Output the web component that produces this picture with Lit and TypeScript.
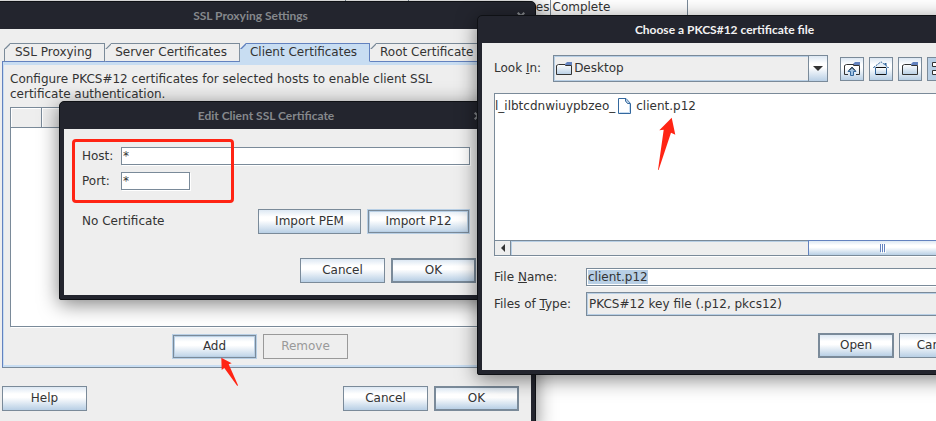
import { LitElement, html, css, svg } from "lit";
import { customElement, property, query } from "lit/decorators.js";

@customElement("desktop-window")
class DesktopWindow extends LitElement {
  @property() heading = "";
  @property({ type: Boolean, reflect: true }) active = false;

  static styles = css`
    :host {
      display: block;
      box-sizing: border-box;
      background: #23252e;
      border: 1px solid #0f1115;
      border-radius: 5px 5px 2px 2px;
      padding: 0 4px 4px;
      box-shadow: 0 4px 20px rgba(0, 0, 0, 0.5);
    }
    .bar {
      display: flex;
      align-items: center;
      height: 27px;
    }
    .title {
      flex: 1;
      margin: 0;
      text-align: center;
      font: 700 12px/27px Lato, "Noto Sans", sans-serif;
      color: #85888c;
    }
    :host([active]) .title {
      color: #f2f2f2;
    }
    .close {
      display: flex;
      width: 20px;
      padding: 0 6px;
      border: 0;
      background: none;
      color: #85888c;
    }
    .body {
      background: #eeeeee;
    }
  `;

  render() {
    return html`
      <header class="bar">
        <h2 class="title">${this.heading}</h2>
        <button class="close" aria-label="Close">
          <svg width="8" height="8" viewBox="0 0 8 8" fill="none" stroke="currentColor" stroke-width="2">
            <path d="M.7 .7 7.3 7.3M7.3 .7 .7 7.3" />
          </svg>
        </button>
      </header>
      <div class="body"><slot></slot></div>
    `;
  }
}

const sheen = svg`
  <defs>
    <linearGradient id="sheen" x1="0" y1="0" x2="0" y2="1">
      <stop offset="0" stop-color="#fff" />
      <stop offset="1" stop-color="#b8cfe5" />
    </linearGradient>
  </defs>`;

const folderIcon = html`<svg width="16" height="13" viewBox="0 0 16 13">
  ${sheen}
  <path d="M.5 12.5V3.5L2.5 2.5H9.5V3.5H15.5V12.5Z" fill="url(#sheen)" stroke="#333" />
  <path d="M9 3V2L11 0H16V3Z" fill="#6382bf" />
</svg>`;

const upIcon = html`<svg width="16" height="14" viewBox="0 0 16 14">
  <path d="M9 3V2L11 0H16V3Z" fill="#6382bf" />
  <path d="M4 12.5H.5V3.5L2.5 2.5H9.5V3.5H15.5V12.5H12" fill="none" stroke="#333" />
  <path d="M8 5 12 9.5H9.5V13.5H6.5V9.5H4Z" fill="#a3c4e4" stroke="#34689e" />
  <path d="M5 8.5 8 5.5 11 8.5" fill="none" stroke="#222" />
</svg>`;

const homeIcon = html`<svg width="16" height="15" viewBox="0 0 16 15">
  ${sheen}
  <path d="M2.5 7V13.5H13.5V7" fill="url(#sheen)" stroke="#34689e" />
  <path d="M12.5 5V2" stroke="#34689e" stroke-width="2" />
  <path d="M.5 6.5 8 .8 15.5 6.5Z" fill="#e7f0f8" stroke="#34689e" stroke-dasharray="2 1" />
  <path d="M3 6.5H13M3 13.5H13" stroke="#111" />
</svg>`;

const listIcon = html`<svg width="14" height="14" viewBox="0 0 14 14" fill="#fff" stroke="#333">
  <path d="M.5 .5H4.5V4.5H.5ZM.5 8.5H4.5V12.5H.5ZM8.5 .5H12.5V4.5H8.5ZM8.5 8.5H12.5V12.5H8.5Z" />
</svg>`;

const detailsIcon = html`<svg width="14" height="14" viewBox="0 0 14 14" stroke="#333">
  <path d="M0 1.5H3M5 1.5H14M0 5.5H3M5 5.5H14M0 9.5H3M5 9.5H14M0 12.5H3M5 12.5H14" />
</svg>`;

const fileIcon = html`<svg width="13" height="16" viewBox="0 0 13 16">
  <path d="M.5 .5H8L12.5 5.5V15.5H.5Z" fill="#fff" stroke="#34689e" />
  <path d="M1.5 14.5H11.5V6" fill="none" stroke="#c8ddf2" />
  <path d="M7.5 1V3L9.5 5.5H12" fill="#b8cfe5" stroke="#34689e" />
</svg>`;

@customElement("app-root")
class AppRoot extends LitElement {
  @query("#file-name") fileName!: HTMLInputElement;

  static styles = css`
    :host {
      display: block;
      position: relative;
      min-height: 100vh;
      overflow: clip;
      background: #fff;
      color: #333;
      font: 12px/15px "DejaVu Sans", sans-serif;
    }
    button,
    input,
    select {
      box-sizing: border-box;
      margin: 0;
      font: inherit;
      color: inherit;
      outline: 0;
    }
    svg {
      display: block;
      flex: none;
    }

    /* session table behind the windows */
    .sessions {
      width: 100%;
      table-layout: fixed;
      border-collapse: collapse;
    }
    .sessions td {
      height: 15px;
      padding: 0 2px;
      border-right: 1px solid #7a8a99;
      white-space: nowrap;
    }
    .sessions td:last-child { border-right: 0; }
    .c-name { width: 345px; }
    .c-mid { width: 63px; }
    .c-time { width: 142px; }
    .c-status { width: 137px; }
    .sessions .right { text-align: right; padding-right: 0; }

    .settings { position: absolute; left: -15px; top: 1px; width: 551px; }
    .edit { position: absolute; left: 59px; top: 101px; width: 434px; }
    .chooser { position: absolute; left: 477px; top: 15px; width: 515px; }

    .btn {
      min-width: 85px;
      height: 25px;
      padding: 0 16px;
      border: 1px solid #7a8a99;
      background: linear-gradient(#dde8f3, #fff 30%, #fff 45%, #b8cfe5);
      white-space: nowrap;
    }
    .btn.default { border-width: 2px; }
    .btn.ring {
      border-color: #b8cfe5;
      box-shadow: inset 0 0 0 1px #7a8a99, inset 0 0 0 2px #b8cfe5;
    }
    .btn:disabled {
      background: #eee;
      border-color: #999;
      color: #999;
    }
    .row {
      display: flex;
      align-items: center;
      gap: 6px;
    }
    .center { justify-content: center; }
    .end { justify-content: flex-end; }
    .push { margin-right: auto; }

    .field {
      height: 18px;
      padding: 0 1px;
      border: 1px solid #7a8a99;
      background: #fff;
      box-shadow: 1px 1px 0 #fff;
    }
    .field::selection { background: #b8cfe5; color: #333; }

    /* settings window */
    .settings-body { padding: 14px 12px 12px; }
    .tabs {
      display: flex;
      position: relative;
      padding-left: 2px;
      margin-bottom: -1px;
      overflow: hidden;
    }
    .tab {
      height: 19px;
      padding: 0 12px 0 10px;
      border: 1px solid #7a8a99;
      border-bottom-color: #6382bf;
      border-left: 0;
      border-radius: 0;
      background: linear-gradient(135deg, #7a8a99 5px, #eee 6px) 0 0 / 6px 6px no-repeat border-box, #eee;
      clip-path: polygon(6px 0, 100% 0, 100% 100%, 0 100%, 0 6px);
      white-space: nowrap;
    }
    .tab:first-child { border-left: 1px solid #7a8a99; }
    .tab:last-child { flex: 1; text-align: left; padding-right: 0; }
    .tab[aria-selected="true"] {
      background: linear-gradient(135deg, #6382bf 5px, #c8ddf2 6px) 0 0 / 6px 6px no-repeat border-box, #c8ddf2;
      border-color: #6382bf;
      border-bottom-color: #c8ddf2;
    }
    .pane {
      border: 1px solid #7a8a99;
      border-left-color: #6382bf;
      border-top-color: #6382bf;
      box-shadow: inset 1px 0 0 #c8ddf2, inset 0 3px 0 #c8ddf2, inset 0 -2px 0 #c8ddf2;
      padding: 10px 8px 8px 7px;
      margin-bottom: 18px;
    }
    .intro { margin: 0 0 5px; }
    .grid {
      height: 218px;
      border: 1px solid #7a8a99;
      background: #fff;
      box-shadow: 1px 1px 0 #fff;
      margin-bottom: 7px;
    }
    .hosts {
      width: 100%;
      table-layout: fixed;
      border-collapse: collapse;
    }
    .hosts th {
      height: 19px;
      padding: 0;
      box-sizing: border-box;
      background: #eee;
      border-bottom: 1px solid #7a8a99;
      border-right: 1px solid #7a8a99;
      box-shadow: inset 1px 1px 0 #fff;
    }
    .hosts .c-check { width: 30px; }

    /* edit dialog */
    .edit-body { padding: 18px 12px 12px; }
    .form {
      display: grid;
      grid-template-columns: 39px 1fr;
      row-gap: 7px;
      align-items: center;
      padding: 0 6px;
      margin-bottom: 19px;
    }
    .form .short { width: 69px; }
    .cert { padding: 0 6px; margin-bottom: 24px; }
    .cert .btn { min-width: 103px; padding: 0; }

    /* file chooser */
    .chooser-body { padding: 12px; }
    .look { gap: 12px; margin-bottom: 11px; }
    .combo {
      display: flex;
      align-items: center;
      flex: 1;
      height: 27px;
      box-sizing: border-box;
      border: 1px solid #7a8a99;
      box-shadow: inset 0 0 0 1px #b8cfe5;
      padding-left: 2px;
    }
    .combo select {
      flex: 1;
      height: 100%;
      padding: 0 2px;
      border: 0;
      background: none;
      appearance: none;
    }
    .drop {
      display: flex;
      align-items: center;
      justify-content: center;
      width: 18px;
      height: 100%;
      border-left: 1px solid #7a8a99;
      background: linear-gradient(#dde8f3, #fff 30%, #fff 45%, #b8cfe5);
    }
    .tools { display: flex; gap: 5px; }
    .tool {
      display: flex;
      align-items: center;
      justify-content: center;
      width: 24px;
      height: 24px;
      padding: 0;
      border: 1px solid #7a8a99;
      background: linear-gradient(#dde8f3, #fff 30%, #fff 45%, #b8cfe5);
    }
    .tool.on { background: #b8cfe5; }
    .tool.on + .tool { margin-left: -5px; }
    .list {
      border: 1px solid #7a8a99;
      background: #fff;
      box-shadow: 1px 1px 0 #fff;
      margin-bottom: 12px;
    }
    .files {
      display: flex;
      align-items: flex-start;
      gap: 3px;
      height: 143px;
      margin: 0;
      padding: 3px 0 0;
      list-style: none;
      overflow: hidden;
    }
    .files li {
      display: flex;
      align-items: center;
      gap: 5px;
      height: 18px;
    }
    .scroll {
      display: flex;
      height: 14px;
      border-top: 1px solid #7a8a99;
      background: #eee;
    }
    .step {
      display: flex;
      align-items: center;
      justify-content: center;
      width: 16px;
      padding: 0;
      border: 0;
      border-right: 1px solid #7a8a99;
      background: #eee;
    }
    .track {
      flex: 1;
      display: flex;
      justify-content: flex-end;
      box-shadow: inset 1px 1px 0 #b8cfe5;
    }
    .thumb {
      display: flex;
      align-items: center;
      justify-content: center;
      width: 148px;
      margin-top: -1px;
      border: 1px solid #6382bf;
      border-bottom: 0;
      background: linear-gradient(#dde8f3, #fff 30%, #fff 45%, #b8cfe5);
    }
    .names {
      display: grid;
      grid-template-columns: 92px 1fr;
      row-gap: 6px;
      align-items: center;
      margin-bottom: 17px;
    }
    .names .combo { height: 24px; padding-left: 0; }
    .chooser-body .end { gap: 5px; }
    .chooser-body .btn { min-width: 76px; padding: 0 12px; }

    /* red markup */
    .mark {
      position: absolute;
      left: 72px;
      top: 139px;
      width: 162px;
      height: 64px;
      box-sizing: border-box;
      border: 3px solid #ff2414;
      border-radius: 4px;
    }
    .arrow { position: absolute; fill: #ff2414; }
    .arrow-file { left: 658px; top: 117px; }
    .arrow-add { left: 221px; top: 357px; }
  `;

  async firstUpdated() {
    await this.updateComplete;
    this.fileName.focus({ preventScroll: true });
    this.fileName.select();
  }

  render() {
    return html`
      <table class="sessions" aria-label="Sessions">
        <colgroup><col class="c-name" /><col class="c-mid" /><col class="c-time" /><col class="c-status" /><col /></colgroup>
        <tr><td></td><td></td><td class="right">es</td><td>Complete</td><td></td></tr>
      </table>

      <desktop-window class="settings" heading="SSL Proxying Settings">
        <div class="settings-body">
          <div class="tabs" role="tablist">
            ${["SSL Proxying", "Server Certificates", "Client Certificates", "Root Certificate"].map(
              (t, i) => html`<button class="tab" role="tab" aria-selected=${i === 2}>${t}</button>`
            )}
          </div>
          <div class="pane" role="tabpanel">
            <p class="intro">Configure PKCS#12 certificates for selected hosts to enable client SSL<br />certificate authentication.</p>
            <div class="grid">
              <table class="hosts" aria-label="Hosts">
                <colgroup><col class="c-check" /><col /><col /></colgroup>
                <tr><th></th><th></th><th></th></tr>
              </table>
            </div>
            <div class="row center">
              <button class="btn ring">Add</button>
              <button class="btn" disabled>Remove</button>
            </div>
          </div>
          <div class="row end">
            <button class="btn push">Help</button>
            <button class="btn">Cancel</button>
            <button class="btn default">OK</button>
          </div>
        </div>
      </desktop-window>

      <desktop-window class="edit" heading="Edit Client SSL Certificate">
        <div class="edit-body">
          <div class="form">
            <label for="host">Host:</label><input class="field" id="host" value="*" />
            <label for="port">Port:</label><input class="field short" id="port" value="*" />
          </div>
          <div class="row cert">
            <span class="push">No Certificate</span>
            <button class="btn">Import PEM</button>
            <button class="btn ring">Import P12</button>
          </div>
          <div class="row end">
            <button class="btn">Cancel</button>
            <button class="btn default">OK</button>
          </div>
        </div>
      </desktop-window>

      <desktop-window class="chooser" heading="Choose a PKCS#12 certificate file" active>
        <div class="chooser-body">
          <div class="row look">
            <label for="look-in">Look <u>I</u>n:</label>
            <div class="combo">
              ${folderIcon}
              <select id="look-in"><option>Desktop</option></select>
              <span class="drop"><svg width="10" height="5" viewBox="0 0 10 5"><path d="M0 0H10L5 5Z" fill="#333" /></svg></span>
            </div>
            <div class="tools">
              <button class="tool" aria-label="Up One Level">${upIcon}</button>
              <button class="tool" aria-label="Home">${homeIcon}</button>
              <button class="tool" aria-label="Create New Folder">${folderIcon}</button>
              <button class="tool on" aria-label="List">${listIcon}</button>
              <button class="tool" aria-label="Details">${detailsIcon}</button>
            </div>
          </div>
          <div class="list">
            <ul class="files">
              <li>l_ilbtcdnwiuypbzeo_</li>
              <li>${fileIcon}client.p12</li>
            </ul>
            <div class="scroll">
              <button class="step" aria-label="Scroll left"><svg width="4" height="8" viewBox="0 0 4 8"><path d="M4 0V8L0 4Z" fill="#333" /></svg></button>
              <div class="track">
                <div class="thumb"><svg width="6" height="9" viewBox="0 0 6 9"><path d="M1.5 1V9M3.5 1V9M5.5 1V9" stroke="#fff" /><path d="M.5 0V8M2.5 0V8M4.5 0V8" stroke="#6382bf" /></svg></div>
              </div>
              <button class="step" aria-label="Scroll right"><svg width="4" height="8" viewBox="0 0 4 8"><path d="M0 0V8L4 4Z" fill="#333" /></svg></button>
            </div>
          </div>
          <div class="names">
            <label for="file-name">File <u>N</u>ame:</label>
            <input class="field" id="file-name" value="client.p12" />
            <label for="file-type">Files of <u>T</u>ype:</label>
            <div class="combo">
              <select id="file-type"><option>PKCS#12 key file (.p12, pkcs12)</option></select>
              <span class="drop"><svg width="10" height="5" viewBox="0 0 10 5"><path d="M0 0H10L5 5Z" fill="#333" /></svg></span>
            </div>
          </div>
          <div class="row end">
            <button class="btn default">Open</button>
            <button class="btn">Cancel</button>
          </div>
        </div>
      </desktop-window>

      <div class="mark"></div>
      <svg class="arrow arrow-file" width="18" height="54" viewBox="0 0 18 54"><path d="M13.7 .7 17.3 17.7 13 15.7 .6 53 0 53 5.7 12.7 1.3 13.3Z" /></svg>
      <svg class="arrow arrow-add" width="18" height="30" viewBox="0 0 18 30"><path d="M.3 .7 10.7 6.3 7.7 7.3 17 28.3 16.3 29 3.3 11 .7 13Z" /></svg>
    `;
  }
}
